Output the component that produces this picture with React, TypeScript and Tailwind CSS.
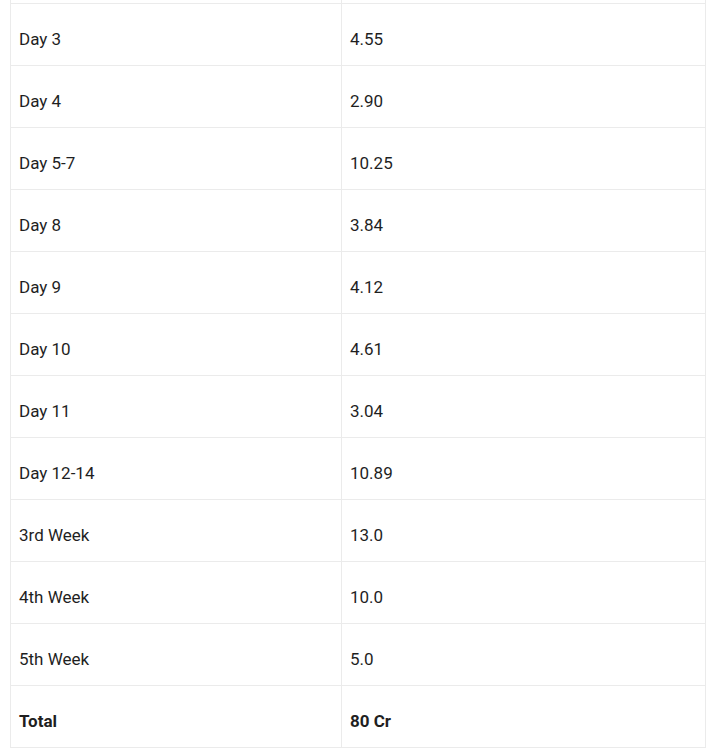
const rows: [string, string][] = [
  ['Day 3', '4.55'],
  ['Day 4', '2.90'],
  ['Day 5-7', '10.25'],
  ['Day 8', '3.84'],
  ['Day 9', '4.12'],
  ['Day 10', '4.61'],
  ['Day 11', '3.04'],
  ['Day 12-14', '10.89'],
  ['3rd Week', '13.0'],
  ['4th Week', '10.0'],
  ['5th Week', '5.0'],
]

function Row({ label, value, bold }: { label: string; value: string; bold?: boolean }) {
  return (
    <div className="grid grid-cols-[331px_1fr] border-t border-[#ebebeb]">
      <div className={`h-[61px] border-r border-[#ebebeb] pl-[8px] pt-[23px] leading-[24px] ${bold ? 'font-bold' : ''}`}>{label}</div>
      <div className={`h-[61px] pl-[8px] pt-[23px] leading-[24px] ${bold ? 'font-bold' : ''}`}>{value}</div>
    </div>
  )
}

export default function App() {
  return (
    <div className="min-h-screen bg-white text-[17px] text-[#1f1f1f] font-['Roboto',sans-serif]">
      <div className="ml-[10px] w-[696px] border-x border-b border-[#ebebeb]">
        {/* tail of the row scrolled off above */}
        <div className="grid grid-cols-[331px_1fr] h-[3px]">
          <div className="border-r border-[#ebebeb]" />
          <div />
        </div>
        {rows.map(([l, v]) => (
          <Row key={l} label={l} value={v} />
        ))}
        <Row label="Total" value="80 Cr" bold />
      </div>
    </div>
  )
}
